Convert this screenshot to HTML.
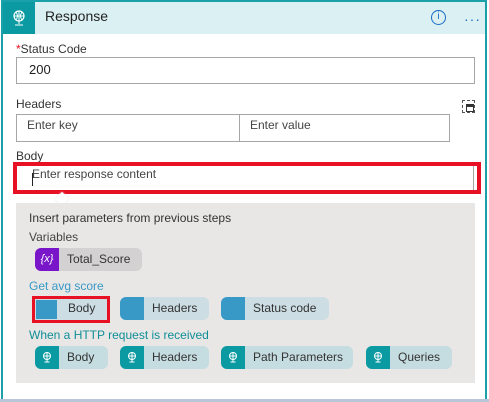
<!DOCTYPE html>
<html><head><meta charset="utf-8"><style>
*{box-sizing:border-box;margin:0;padding:0}
body{width:489px;height:402px;background:#fff;font-family:"Segoe UI","Liberation Sans",sans-serif;font-size:12px;color:#333;position:relative;overflow:hidden}
.a{position:absolute}
.card{left:1px;top:0;width:486px;height:399px;border:2px solid #1aa0a8;border-bottom:none}
.hdr{left:3px;top:2px;width:482px;height:32px;background:#dbf0f3}
.ic{left:3px;top:2px;width:32px;height:32px;background:#0b9aa2}
.inp{border:1px solid #a6a6a6;background:#fff}
.lbl{font-size:12px;color:#333}
.pill{position:absolute;height:23px;border-radius:6px;background:#ccdde4;font-size:12px;line-height:23px;overflow:hidden}
.pill .sq{position:absolute;left:0;top:0;width:24px;height:23px;background:#3899c7}
.pill span{position:absolute;left:32px;top:0}
.t .sq{background:#0b9aa2}
.t{background:#c5dce0}
</style></head><body>
<div class="a" style="left:0;top:399px;width:489px;height:3px;background:#b8c6d8"></div>
<div class="a card"></div>
<div class="a hdr"></div>
<div class="a ic"><svg width="32" height="32" viewBox="0 0 32 32"><circle cx="16" cy="14" r="5" fill="none" stroke="#fff" stroke-width="1.2"/><path d="M11 14h10M16 9v10M13 10q3 4 0 8M19 10q-3 4 0 8M16 19v3M12 23h8" stroke="#fff" fill="none" stroke-width="1"/></svg></div>
<div class="a" style="left:45px;top:8px;font-size:14px;color:#222">Response</div>
<div class="a" style="left:431px;top:10px;width:15px;height:15px;border:1.5px solid #1a6bc4;border-radius:50%;color:#1a6bc4;font-size:10px;text-align:center;line-height:12px">i</div>
<div class="a" style="left:464px;top:11px;color:#1a6bc4;font-size:14px;letter-spacing:1px">···</div>
<div class="a lbl" style="left:16px;top:42px"><span style="color:#e81123">*</span>Status Code</div>
<div class="a inp" style="left:16px;top:57px;width:459px;height:27px"><span class="a" style="left:12px;top:4px;font-size:13px;color:#222">200</span></div>
<div class="a lbl" style="left:16px;top:97px">Headers</div>
<div class="a inp" style="left:16px;top:114px;width:224px;height:28px"><span class="a" style="left:10px;top:3px;color:#444">Enter key</span></div>
<div class="a inp" style="left:239px;top:114px;width:211px;height:28px"><span class="a" style="left:10px;top:3px;color:#444">Enter value</span></div>
<div class="a" style="left:462px;top:100px;width:13px;height:13px;border:1px dashed #555"><div class="a" style="left:3px;top:3px;width:8px;height:8px;border:1.5px solid #333;border-top-width:3px"></div></div>
<div class="a lbl" style="left:16px;top:149px">Body</div>
<div class="a" style="left:13px;top:162px;width:468px;height:32px;border:4px solid #e81123;background:#fff"><div class="a" style="left:0;top:0;width:457px;height:24px;border-right:1px solid #a6a6a6"></div><span class="a" style="left:15px;top:1px;color:#444">Enter response content</span><div class="a" style="left:15px;top:7px;width:1px;height:13px;background:#222"></div></div>
<div class="a" style="left:57px;top:194px;width:10px;height:10px;background:#fff;transform:rotate(45deg);box-shadow:0 0 2px #ddd"></div>
<div class="a" style="left:16px;top:203px;width:459px;height:180px;background:#e8e7e6"></div>
<div class="a" style="left:29px;top:211px;color:#333">Insert parameters from previous steps</div>
<div class="a" style="left:29px;top:230px;color:#444">Variables</div>
<div class="pill" style="left:35px;top:248px;width:107px;background:#d3d1d1"><div class="sq" style="background:#7a16c9;color:#fff;font-style:italic;text-align:center;font-size:11px">{x}</div><span>Total_Score</span></div>
<div class="a" style="left:29px;top:279px;color:#3899c7">Get avg score</div>
<div class="pill" style="left:120px;top:297px;width:89px"><div class="sq"></div><span>Headers</span></div>
<div class="pill" style="left:221px;top:297px;width:108px"><div class="sq"></div><span>Status code</span></div>
<div class="a" style="left:32px;top:296px;width:78px;height:27px;border:3px solid #e81123;background:#ccdde4"><div class="a" style="left:1px;top:1px;width:21px;height:19px;background:#3899c7"></div><span class="a" style="left:33px;top:2px">Body</span></div>
<div class="a" style="left:29px;top:328px;color:#0f8e96">When a HTTP request is received</div>
<svg width="0" height="0" style="position:absolute"><defs><g id="gl"><circle cx="12" cy="10" r="3.5" fill="none" stroke="#fff" stroke-width="1"/><path d="M8.5 10h7M12 6.5v7M12 13.5v2M9.5 16h5" stroke="#fff" fill="none" stroke-width="1"/></g></defs></svg>
<div class="pill t" style="left:35px;top:346px;width:73px"><div class="sq"><svg width="24" height="23"><use href="#gl"/></svg></div><span>Body</span></div>
<div class="pill t" style="left:120px;top:346px;width:89px"><div class="sq"><svg width="24" height="23"><use href="#gl"/></svg></div><span>Headers</span></div>
<div class="pill t" style="left:221px;top:346px;width:132px"><div class="sq"><svg width="24" height="23"><use href="#gl"/></svg></div><span>Path Parameters</span></div>
<div class="pill t" style="left:366px;top:346px;width:86px"><div class="sq"><svg width="24" height="23"><use href="#gl"/></svg></div><span>Queries</span></div>
</body></html>
